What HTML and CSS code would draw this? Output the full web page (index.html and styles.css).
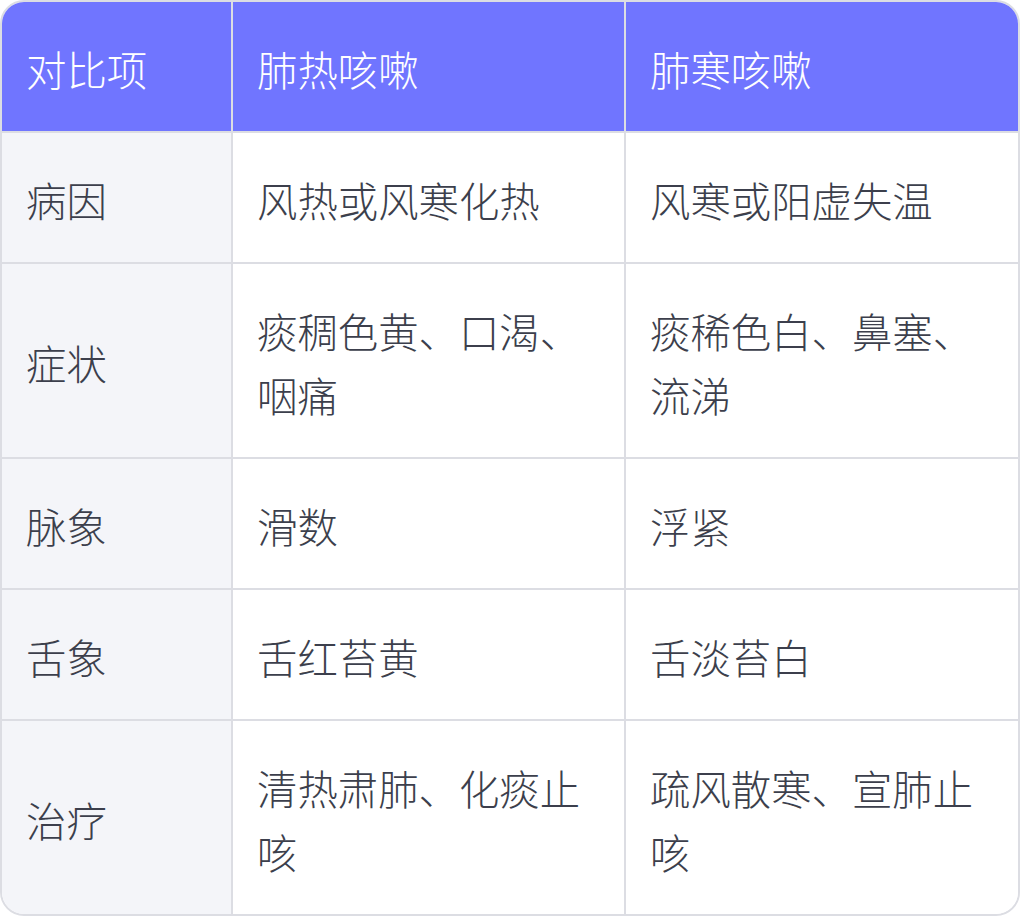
FILE: index.html
```html
<!DOCTYPE html>
<html lang="zh-CN">
<head>
<meta charset="utf-8">
<title>肺热咳嗽与肺寒咳嗽对比</title>
<link rel="stylesheet" href="styles.css">
</head>
<body>
<div class="table-wrap">
  <table class="compare">
    <colgroup>
      <col class="col-item">
      <col class="col-a">
      <col class="col-b">
    </colgroup>
    <thead>
      <tr>
        <th>对比项</th>
        <th>肺热咳嗽</th>
        <th>肺寒咳嗽</th>
      </tr>
    </thead>
    <tbody>
      <tr>
        <td class="item">病因</td>
        <td>风热或风寒化热</td>
        <td>风寒或阳虚失温</td>
      </tr>
      <tr>
        <td class="item">症状</td>
        <td>痰稠色黄、口渴、咽痛</td>
        <td>痰稀色白、鼻塞、流涕</td>
      </tr>
      <tr>
        <td class="item">脉象</td>
        <td>滑数</td>
        <td>浮紧</td>
      </tr>
      <tr>
        <td class="item">舌象</td>
        <td>舌红苔黄</td>
        <td>舌淡苔白</td>
      </tr>
      <tr>
        <td class="item">治疗</td>
        <td>清热肃肺、化痰止咳</td>
        <td>疏风散寒、宣肺止咳</td>
      </tr>
    </tbody>
  </table>
</div>
</body>
</html>
```

FILE: styles.css
```css
* { box-sizing: border-box; }

html, body {
  margin: 0;
  padding: 0;
  background: #ffffff;
}

body {
  font-family: "Noto Sans CJK SC", "Noto Sans", sans-serif;
}

.table-wrap {
  width: 1020px;
  border: 2px solid #dcdde3;
  border-radius: 24px;
  overflow: hidden;
}

.compare {
  width: 100%;
  table-layout: fixed;
  border-collapse: separate;
  border-spacing: 0;
  font-size: 40.4px;
  line-height: 64px;
  color: #3c3f4c;
}

.col-item { width: 231px; }
.col-a { width: 393px; }

.compare th,
.compare td {
  padding: 35px 24px 30px 24px;
  text-align: left;
  vertical-align: middle;
  font-weight: 300;
  border-right: 2px solid #dcdde3;
  border-bottom: 2px solid #dcdde3;
}

.compare th:last-child,
.compare td:last-child {
  border-right: none;
}

.compare tbody tr:last-child td {
  border-bottom: none;
}

.compare th {
  background: #7075ff;
  color: #ffffff;
}

.compare td {
  background: #ffffff;
}

.compare td.item {
  background: #f4f5f9;
}
```
